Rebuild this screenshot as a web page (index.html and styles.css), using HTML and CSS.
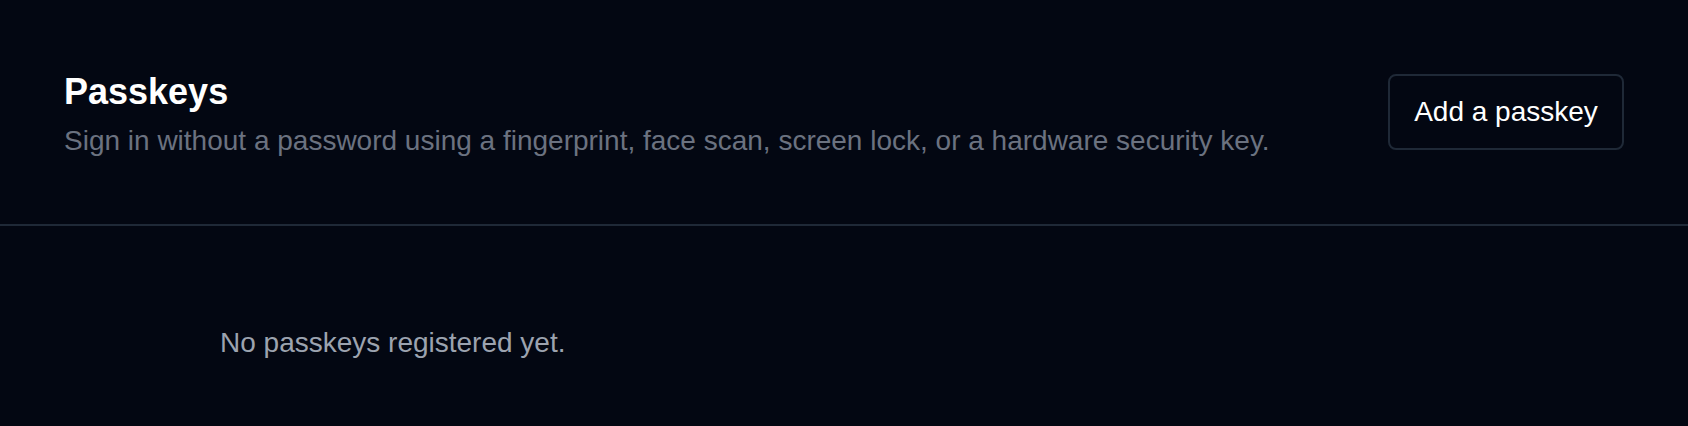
FILE: index.html
```html
<!DOCTYPE html>
<html lang="en">
<head>
<meta charset="utf-8">
<title>Passkeys</title>
<link rel="stylesheet" href="styles.css">
</head>
<body>
  <section class="panel">
    <header class="panel-header">
      <div class="intro">
        <h2 class="title">Passkeys</h2>
        <p class="subtitle">Sign in without a password using a fingerprint, face scan, screen lock, or a hardware security key.</p>
      </div>
      <button class="add-btn" type="button">Add a passkey</button>
    </header>
    <div class="empty">
      <p class="empty-text">No passkeys registered yet.</p>
    </div>
  </section>
</body>
</html>
```

FILE: styles.css
```css
html, body {
  margin: 0;
  padding: 0;
  background: #030712;
  height: 100%;
}

body {
  font-family: "Liberation Sans", Arial, sans-serif;
  color: #ffffff;
}

.panel {
  display: flex;
  flex-direction: column;
}

.panel-header {
  display: flex;
  align-items: center;
  justify-content: space-between;
  height: 224px;
  padding: 0 64px 0 64px;
  border-bottom: 2px solid #1f2937;
}

.intro {
  padding-top: 8px;
}

.title {
  margin: 0;
  font-size: 36px;
  line-height: 40px;
  font-weight: 700;
  color: #ffffff;
}

.subtitle {
  margin: 9px 0 0;
  font-size: 28px;
  line-height: 40px;
  color: #6b7280;
}

.add-btn {
  width: 236px;
  height: 76px;
  margin-top: -1px;
  padding: 0;
  background: #030712;
  border: 2px solid #1f2937;
  border-radius: 8px;
  color: #ffffff;
  font-family: "Liberation Sans", Arial, sans-serif;
  font-size: 28px;
  cursor: pointer;
}

.empty {
  padding: 99px 0 0 220px;
}

.empty-text {
  margin: 0;
  font-size: 28px;
  line-height: 36px;
  color: #9ca3af;
}
```
